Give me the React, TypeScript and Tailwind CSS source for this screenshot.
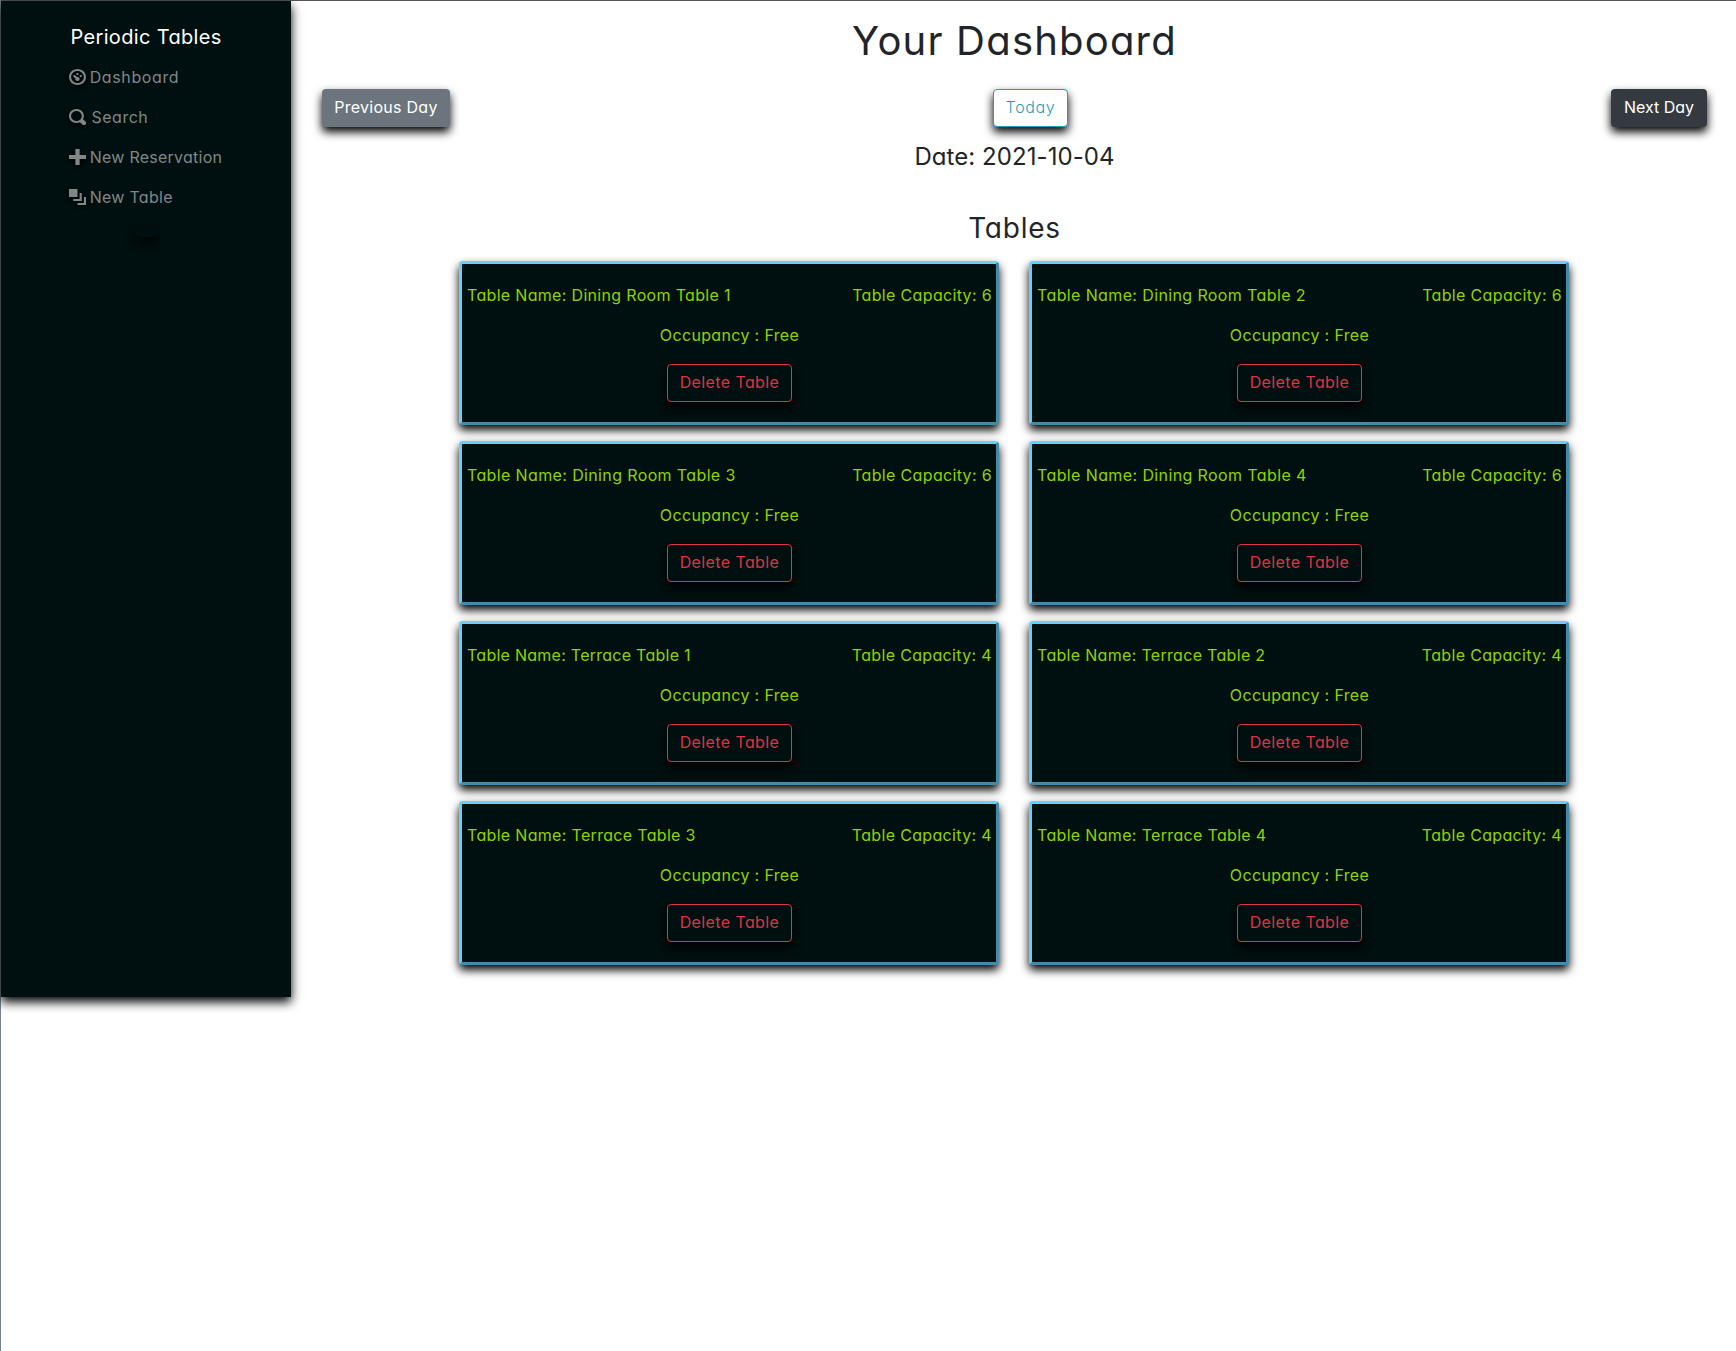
const FONT = "font-['Inter',sans-serif] [font-feature-settings:'cv11']";

function Icon({ d }: { d: string }) {
  return (
    <svg viewBox="0 0 8 8" className="h-4 w-[17px] shrink-0 fill-[#808787] drop-shadow-[0_2px_2px_#000]" preserveAspectRatio="none">
      <path d={d} />
    </svg>
  );
}

const nav = [
  {
    label: "Dashboard",
    tracking: "tracking-[0.62px]",
    gap: "gap-[3.7px]",
    d: "M4 0c-2.2 0-4 1.8-4 4s1.8 4 4 4 4-1.8 4-4-1.8-4-4-4zm0 1c1.66 0 3 1.34 3 3s-1.34 3-3 3-3-1.34-3-3 1.34-3 3-3zm0 1c-.28 0-.5.22-.5.5s.22.5.5.5.5-.22.5-.5-.22-.5-.5-.5zm-1.66 1a.5.5 0 0 0-.19.84l.91.91c-.02.08-.06.16-.06.25 0 .55.45 1 1 1s1-.45 1-1-.45-1-1-1c-.09 0-.17.04-.25.06l-.91-.91a.5.5 0 0 0-.44-.16.5.5 0 0 0-.06 0zm3.16 0c-.28 0-.5.22-.5.5s.22.5.5.5.5-.22.5-.5-.22-.5-.5-.5z",
  },
  {
    label: "Search",
    tracking: "tracking-[0.5px]",
    gap: "gap-[5.5px]",
    d: "M3.5 0c-1.93 0-3.5 1.57-3.5 3.5s1.57 3.5 3.5 3.5c.59 0 1.17-.14 1.66-.41a1 1 0 0 0 .13.13l1 1a1.02 1.02 0 1 0 1.44-1.44l-1-1a1 1 0 0 0-.16-.13c.27-.49.44-1.06.44-1.66 0-1.93-1.55-3.5-3.5-3.5zm0 1c1.39 0 2.5 1.11 2.5 2.5 0 .66-.24 1.27-.66 1.72-.01.01-.02.02-.03.03a1 1 0 0 0-.13.13c-.44.4-1.04.63-1.69.63-1.39 0-2.5-1.11-2.5-2.5s1.11-2.5 2.5-2.5z",
  },
  {
    label: "New Reservation",
    tracking: "tracking-[0.25px]",
    gap: "gap-[3.7px]",
    d: "M3 0v3h-3v2h3v3h2v-3h3v-2h-3v-3h-2z",
  },
  {
    label: "New Table",
    tracking: "tracking-[0.28px]",
    gap: "gap-[3.7px]",
    d: "M0 0v4h4v-4h-4zm5 2v3h-3v1h4v-4h-1zm2 2v3h-3v1h4v-4h-1z",
  },
];

const tables = [
  { name: "Dining Room Table 1", capacity: 6, tracking: "tracking-[0.32px]" },
  { name: "Dining Room Table 2", capacity: 6, tracking: "tracking-[0.38px]" },
  { name: "Dining Room Table 3", capacity: 6, tracking: "tracking-[0.37px]" },
  { name: "Dining Room Table 4", capacity: 6, tracking: "tracking-[0.39px]" },
  { name: "Terrace Table 1", capacity: 4, tracking: "tracking-[0.26px]" },
  { name: "Terrace Table 2", capacity: 4, tracking: "tracking-[0.31px]" },
  { name: "Terrace Table 3", capacity: 4, tracking: "tracking-[0.32px]" },
  { name: "Terrace Table 4", capacity: 4, tracking: "tracking-[0.33px]" },
];

function Card({ name, capacity, tracking }: { name: string; capacity: number; tracking: string }) {
  return (
    <div className="flex h-[164px] flex-col items-center rounded-[4px] border-[3px] border-t-[#66d0f8] border-l-[#66d0f8] border-r-[#458aa6] border-b-[#458aa6] bg-[#000f0f] pt-[19px] pr-1 pl-[5px] text-[#8fd400] shadow-[0_5px_10px_#000]">
      <div className="flex w-full justify-between leading-6">
        <span className={`whitespace-nowrap ${tracking}`}>Table Name: {name}</span>
        <span className="whitespace-nowrap tracking-[0.34px]">Table Capacity: {capacity}</span>
      </div>
      <p className="mt-4 leading-6 tracking-[0.34px]">Occupancy : Free</p>
      <button className="mt-[17px] h-[38px] w-[125px] rounded-[4px] border border-[#dc3545] pb-0.5 tracking-[0.4px] text-[#dc3545] shadow-[0_5px_10px_#000]">
        Delete Table
      </button>
    </div>
  );
}

export default function App() {
  return (
    <div className={`flex h-[1351px] w-[1736px] border-t border-l border-t-[#555] border-l-[#76838a] bg-white text-base text-[#212529] ${FONT}`}>
      <nav className="flex h-[996px] w-[290px] shrink-0 flex-col bg-[#000f0f] pl-[68px] text-[#808787] shadow-[0_5px_10px_#000]">
        <div className="mt-[21px] ml-[1.5px] text-xl leading-[30px] tracking-[0.34px] text-white">Periodic Tables</div>
        <div className="mt-[5px] flex flex-col">
          {nav.map((n) => (
            <a key={n.label} className={`flex h-10 items-center ${n.gap}`}>
              <Icon d={n.d} />
              <span className={n.tracking}>{n.label}</span>
            </a>
          ))}
        </div>
        <button aria-label="Toggle sidebar" className="mt-3 ml-[65px] h-2 w-6 rounded-[50%] bg-[#000f0f] shadow-[0_5px_10px_#000]" />
      </nav>
      <main className="flex flex-1 flex-col items-center pr-[29px] pl-[31px]">
        <h1 className="mt-4 text-[40px] leading-[48px] font-normal tracking-[1.2px]">Your Dashboard</h1>
        <div className="mt-6 flex w-full justify-between">
          <button className="h-[38px] w-32 rounded-[4px] bg-[#6c757d] pb-0.5 tracking-[0.26px] text-white shadow-[0_5px_10px_#000]">Previous Day</button>
          <button className="h-[38px] w-[75px] rounded-[4px] border border-[#17a2b8] bg-white pb-0.5 font-light tracking-[0.65px] text-[#17a2b8] shadow-[0_5px_10px_#000]">Today</button>
          <button className="h-[38px] w-24 rounded-[4px] bg-[#343a40] pb-0.5 text-white shadow-[0_5px_10px_#000]">Next Day</button>
        </div>
        <h4 className="mt-[15px] text-2xl leading-[29px] font-normal tracking-[0.07px]">Date: 2021-10-04</h4>
        <h3 className="mt-[40px] text-[28px] leading-[34px] font-normal tracking-[0.75px]">Tables</h3>
        <div className="mt-4 ml-[137px] grid w-[1110px] grid-cols-2 gap-x-[30px] gap-y-4 self-start">
          {tables.map((t) => (
            <Card key={t.name} {...t} />
          ))}
        </div>
      </main>
    </div>
  );
}
